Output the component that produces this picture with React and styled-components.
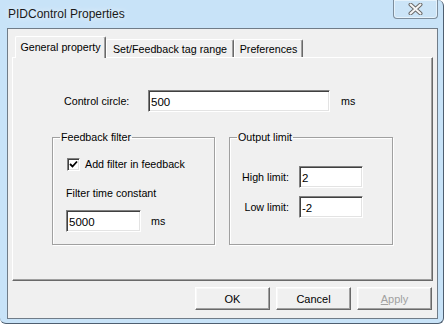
import React from 'react'
import styled, { createGlobalStyle } from 'styled-components'

const Global = createGlobalStyle`
  html, body {
    margin: 0;
    padding: 0;
    background: #ffffff;
  }
  body {
    font-family: "Liberation Sans", Arial, sans-serif;
    font-size: 10.7px;
    color: #000;
  }
`

function App() {
  return (
    <>
      <Global />
      <Window>
        <TitleBar>
          <Title>PIDControl Properties</Title>
          <CloseButton>
            <svg width="15" height="12" viewBox="0 0 15 12">
              <path d="M2.5 1.5 L12.5 10.5 M12.5 1.5 L2.5 10.5" stroke="#6a6a6a" strokeWidth="4" strokeLinecap="round" />
              <path d="M2.5 1.5 L12.5 10.5 M12.5 1.5 L2.5 10.5" stroke="#f6f6f6" strokeWidth="2" strokeLinecap="round" />
            </svg>
          </CloseButton>
        </TitleBar>

        <Client>
          <Tabs>
            <Tab active width={91}>General property</Tab>
            <Tab width={128}>Set/Feedback tag range</Tab>
            <Tab width={69}>Preferences</Tab>
          </Tabs>

          <Page>
            <ControlRow>
              <Label width={84}>Control circle:</Label>
              <Input width={182} defaultValue="500" />
              <Unit>ms</Unit>
            </ControlRow>

            <Groups>
              <Group width={163}>
                <Legend>Feedback filter</Legend>
                <CheckRow>
                  <CheckBox>
                    <svg width="9" height="9" viewBox="0 0 9 9">
                      <path d="M1 4 L3.5 6.5 L8 1.5" stroke="#000" strokeWidth="1.8" fill="none" />
                    </svg>
                  </CheckBox>
                  <span>Add filter in feedback</span>
                </CheckRow>
                <Caption>Filter time constant</Caption>
                <FieldRow>
                  <Input width={75} defaultValue="5000" />
                  <Unit gap={10}>ms</Unit>
                </FieldRow>
              </Group>

              <Group width={164}>
                <Legend>Output limit</Legend>
                <LimitRow first>
                  <Label width={59} right>High limit:</Label>
                  <Input width={64} defaultValue="2" />
                </LimitRow>
                <LimitRow>
                  <Label width={59} right>Low limit:</Label>
                  <Input width={64} defaultValue="-2" />
                </LimitRow>
              </Group>
            </Groups>
          </Page>

          <ButtonRow>
            <Button>OK</Button>
            <Button>Cancel</Button>
            <Button disabled><u>A</u>pply</Button>
          </ButtonRow>
        </Client>
      </Window>
    </>
  )
}

const Window = styled.div`
  width: 444px;
  height: 324px;
  box-sizing: border-box;
  background: #c8e3f8;
  border-right: 1px solid #4f5f70;
  border-bottom: 1px solid #4f5f70;
  border-top-right-radius: 6px;
  border-bottom-right-radius: 6px;
  border-bottom-left-radius: 6px;
  padding: 0 5px 0 7px;
  display: flex;
  flex-direction: column;
`
const TitleBar = styled.div`
  height: 28px;
  display: flex;
  align-items: flex-start;
`
const Title = styled.div`
  padding-left: 1px;
  line-height: 28px;
  font-size: 12px;
  color: #1a1a1a;
  text-shadow: 0 0 6px rgba(255, 255, 255, 0.9);
`
const CloseButton = styled.div`
  margin-left: auto;
  width: 45px;
  height: 19px;
  box-sizing: border-box;
  border: 1px solid #7d8d9c;
  border-top: none;
  border-radius: 0 0 4px 4px;
  background: #cbe4f7;
  box-shadow: inset 0 0 0 1px rgba(255, 255, 255, 0.5);
  display: flex;
  align-items: center;
  justify-content: center;
`
const Client = styled.div`
  height: 291px;
  box-sizing: border-box;
  background: #f0f0f0;
  border: 1px solid #707c88;
  padding: 7px 4px 0 4px;
  display: flex;
  flex-direction: column;
`
const Tabs = styled.div`
  height: 21px;
  display: flex;
  align-items: flex-end;
  padding-left: 3px;
  position: relative;
  z-index: 1;
`
const Tab = styled.div`
  width: ${p => p.width}px;
  height: ${p => (p.active ? 22 : 18)}px;
  box-sizing: border-box;
  margin-bottom: ${p => (p.active ? -1 : 0)}px;
  background: #f0f0f0;
  border-top: 1px solid #ffffff;
  border-left: 1px solid #ffffff;
  border-right: 1px solid #696969;
  box-shadow: inset -1px 0 0 #a0a0a0;
  border-radius: 2px 2px 0 0;
  display: flex;
  align-items: ${p => (p.active ? 'flex-start' : 'center')};
  padding-top: ${p => (p.active ? 3 : 0)}px;
  justify-content: center;
  line-height: 14px;
  white-space: nowrap;
`
const Page = styled.div`
  height: 224px;
  box-sizing: border-box;
  border-top: 1px solid #ffffff;
  border-left: 1px solid #ffffff;
  border-right: 1px solid #696969;
  border-bottom: 1px solid #696969;
  box-shadow: inset -1px -1px 0 #a0a0a0;
  padding: 32px 0 0 0;
  display: flex;
  flex-direction: column;
`
const ControlRow = styled.div`
  display: flex;
  align-items: center;
  padding-left: 51px;
`
const Label = styled.span`
  width: ${p => p.width}px;
  text-align: ${p => (p.right ? 'right' : 'left')};
  margin-right: ${p => (p.right ? 10 : 0)}px;
  line-height: 14px;
  white-space: nowrap;
`
const Input = styled.input`
  width: ${p => p.width}px;
  height: 22px;
  box-sizing: border-box;
  margin: 0;
  padding: 1px 0 0 2px;
  font-family: "Liberation Sans", Arial, sans-serif;
  font-size: 11.5px;
  color: #000;
  background: #ffffff;
  border-top: 1px solid #808080;
  border-left: 1px solid #808080;
  border-right: 1px solid #ffffff;
  border-bottom: 1px solid #ffffff;
  box-shadow: inset 1px 1px 0 #404040, inset -1px -1px 0 #e3e3e3;
  outline: none;
  vertical-align: top;
`
const Unit = styled.span`
  margin-left: ${p => p.gap || 11}px;
  line-height: 14px;
`
const Groups = styled.div`
  display: flex;
  gap: 14px;
  padding-left: 39px;
  margin-top: 18px;
`
const Group = styled.fieldset`
  width: ${p => p.width}px;
  height: 115px;
  box-sizing: border-box;
  margin: 0;
  padding: 0;
  border: 1px solid #a0a0a0;
  box-shadow: inset 1px 1px 0 #ffffff, 1px 1px 0 #ffffff;
  border-radius: 0;
  display: flex;
  flex-direction: column;
`
const Legend = styled.legend`
  margin-left: 7px;
  padding: 0 1px;
  line-height: 14px;
  height: 14px;
`
const CheckRow = styled.label`
  display: flex;
  align-items: center;
  gap: 5px;
  margin: 13px 0 0 14px;
  line-height: 14px;
`
const CheckBox = styled.span`
  width: 13px;
  height: 13px;
  box-sizing: border-box;
  background: #ffffff;
  border-top: 1px solid #808080;
  border-left: 1px solid #808080;
  border-right: 1px solid #ffffff;
  border-bottom: 1px solid #ffffff;
  box-shadow: inset 1px 1px 0 #404040, inset -1px -1px 0 #e3e3e3;
  display: flex;
  align-items: center;
  justify-content: center;
`
const Caption = styled.div`
  margin: 15px 0 0 13px;
  line-height: 14px;
`
const FieldRow = styled.div`
  display: flex;
  align-items: center;
  margin: 10px 0 0 13px;
`
const LimitRow = styled.div`
  display: flex;
  align-items: center;
  margin-top: ${p => (p.first ? 22 : 8)}px;
`
const ButtonRow = styled.div`
  display: flex;
  justify-content: flex-end;
  gap: 6px;
  margin-top: 6px;
  padding-right: 1px;
`
const Button = styled.button`
  width: 75px;
  height: 23px;
  box-sizing: border-box;
  margin: 0;
  padding: 0;
  font-family: "Liberation Sans", Arial, sans-serif;
  font-size: 11px;
  color: ${p => (p.disabled ? '#a0a0a0' : '#000')};
  background: #f0f0f0;
  border-top: 1px solid #ffffff;
  border-left: 1px solid #ffffff;
  border-right: 1px solid #696969;
  border-bottom: 1px solid #696969;
  box-shadow: inset -1px -1px 0 #a0a0a0, inset 1px 1px 0 #f8f8f8;
  u {
    text-decoration: underline;
  }
`

export default App
